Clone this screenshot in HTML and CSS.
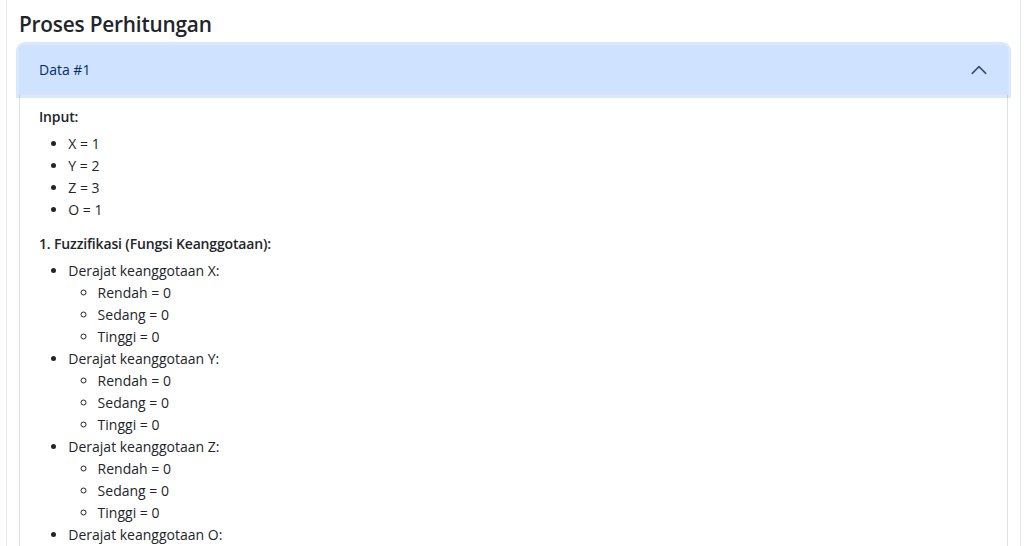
FILE: index.html
```html
<!DOCTYPE html>
<html lang="id">
<head>
<meta charset="utf-8">
<title>Proses Perhitungan</title>
<link rel="stylesheet" href="styles.css">
</head>
<body>
<div class="card">
  <h4 class="title">Proses Perhitungan</h4>
  <div class="accordion">
    <div class="acc-item">
      <button class="acc-button" type="button">
        <span>Data #1</span>
        <svg class="chev" viewBox="0 0 16 16" width="18" height="18" aria-hidden="true"><path d="M2 11L8 5L14 11" fill="none" stroke="#344a6b" stroke-width="1.3" stroke-linecap="round" stroke-linejoin="round"/></svg>
      </button>
      <div class="acc-body">
        <h6>Input:</h6>
        <ul>
          <li>X = 1</li>
          <li>Y = 2</li>
          <li>Z = 3</li>
          <li>O = 1</li>
        </ul>
        <h6>1. Fuzzifikasi (Fungsi Keanggotaan):</h6>
        <ul>
          <li>Derajat keanggotaan X:
            <ul>
              <li>Rendah = 0</li>
              <li>Sedang = 0</li>
              <li>Tinggi = 0</li>
            </ul>
          </li>
          <li>Derajat keanggotaan Y:
            <ul>
              <li>Rendah = 0</li>
              <li>Sedang = 0</li>
              <li>Tinggi = 0</li>
            </ul>
          </li>
          <li>Derajat keanggotaan Z:
            <ul>
              <li>Rendah = 0</li>
              <li>Sedang = 0</li>
              <li>Tinggi = 0</li>
            </ul>
          </li>
          <li>Derajat keanggotaan O:
            <ul>
              <li>Rendah = 0</li>
              <li>Sedang = 0</li>
              <li>Tinggi = 0</li>
            </ul>
          </li>
        </ul>
      </div>
    </div>
  </div>
</div>
</body>
</html>
```
FILE: styles.css
```css
html, body {
  margin: 0;
  padding: 0;
  background: #ffffff;
}
*, *::before, *::after {
  box-sizing: border-box;
}
body {
  font-family: "Segoe UI", "Open Sans", "Noto Sans", sans-serif;
  font-size: 14px;
  line-height: 22px;
  color: #212529;
  overflow: hidden;
  height: 546px;
}
.card {
  margin-left: 6px;
  width: 1015px;
  border-left: 1px solid #e3e6ea;
  border-right: 1px solid #e3e6ea;
  padding: 11px 12px 0 12px;
  min-height: 560px;
}
.title {
  margin: 0 0 7.33px 0;
  font-size: 20.8px;
  font-weight: 600;
  letter-spacing: -0.2px;
  line-height: 26.4px;
  color: #212529;
}
.accordion {
  display: flex;
  flex-direction: column;
}
.acc-item {
  border: 1px solid #dee2e6;
  border-top: 0;
  border-radius: 6px 6px 0 0;
  background: #fff;
}
.acc-button {
  display: flex;
  align-items: center;
  width: calc(100% + 2px);
  margin: 0 -1px;
  padding: 14px 20px 14px 20px;
  border: 0;
  border-radius: 6px 6px 0 0;
  background: #cfe2ff;
  color: #052c65;
  font: inherit;
  line-height: 22px;
  text-align: left;
  box-shadow: 0 0 0 3px rgba(13, 110, 253, 0.16), inset 0 -1px 0 #dee2e6;
  position: relative;
  z-index: 1;
}
.chev {
  margin-left: auto;
  flex: none;
}
.acc-body {
  padding: 13px 18px 14.67px 19px;
}
h6 {
  margin: 0 0 7.33px 0;
  font-size: 14px;
  font-weight: 600;
  letter-spacing: -0.15px;
  line-height: 17.6px;
}
ul {
  margin: 0 0 14.67px 0;
  padding-left: 29.3px;
}
ul ul {
  margin-bottom: 0;
  list-style-type: circle;
}
```
